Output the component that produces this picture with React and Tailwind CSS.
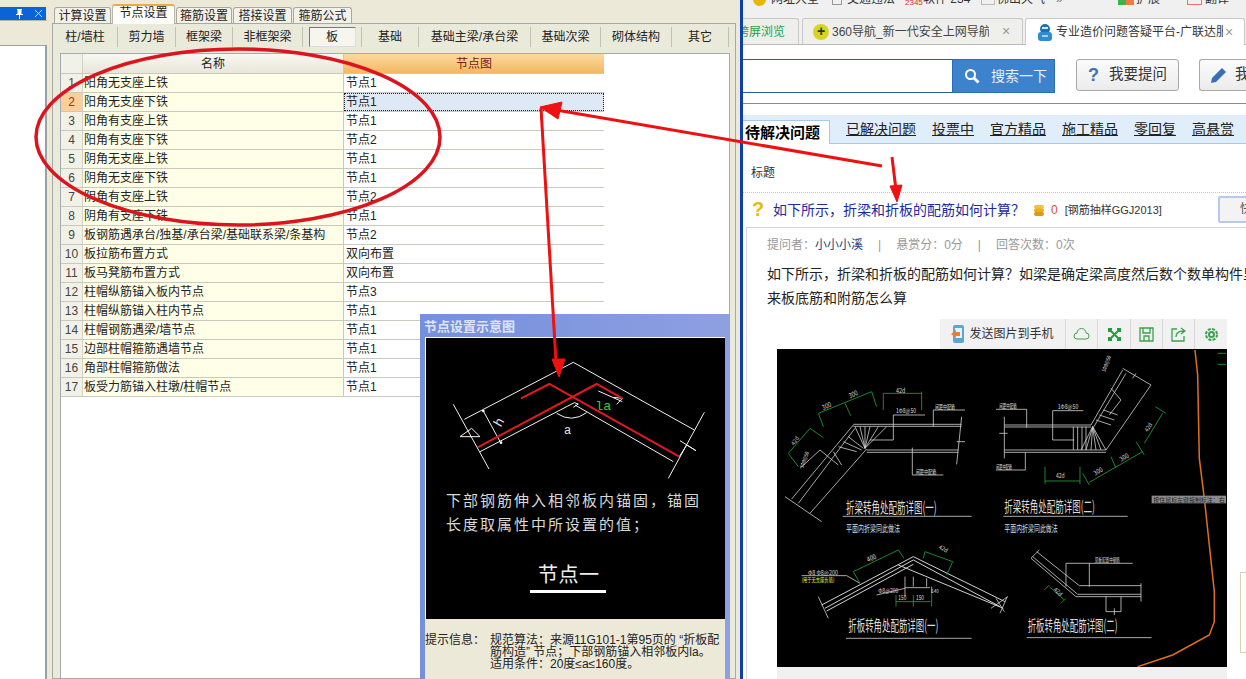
import React from "react";

const cjk = "font-['Liberation_Sans','Noto_Sans_CJK_SC',sans-serif]";

const rows = [
  ["阳角无支座上铁", "节点1"],
  ["阳角无支座下铁", "节点1"],
  ["阳角有支座上铁", "节点1"],
  ["阳角有支座下铁", "节点2"],
  ["阴角无支座上铁", "节点1"],
  ["阴角无支座下铁", "节点1"],
  ["阴角有支座上铁", "节点2"],
  ["阴角有支座下铁", "节点1"],
  ["板钢筋遇承台/独基/承台梁/基础联系梁/条基构", "节点2"],
  ["板拉筋布置方式", "双向布置"],
  ["板马凳筋布置方式", "双向布置"],
  ["柱帽纵筋锚入板内节点", "节点3"],
  ["柱帽纵筋锚入柱内节点", "节点1"],
  ["柱帽钢筋遇梁/墙节点", "节点1"],
  ["边部柱帽箍筋遇墙节点", "节点1"],
  ["角部柱帽箍筋做法", "节点1"],
  ["板受力筋锚入柱墩/柱帽节点", "节点1"],
];

const topTabs = [
  ["计算设置", "w-[57px]"],
  ["节点设置", "w-[63px]"],
  ["箍筋设置", "w-[56px]"],
  ["搭接设置", "w-[59px]"],
  ["箍筋公式", "w-[59px]"],
];
const subTabs = [
  ["柱/墙柱", "w-[65px]"],
  ["剪力墙", "w-[58px]"],
  ["框架梁", "w-[57px]"],
  ["非框架梁", "w-[70px]"],
  ["板", "w-[59px]"],
  ["基础", "w-[57px]"],
  ["基础主梁/承台梁", "w-[112px]"],
  ["基础次梁", "w-[70px]"],
  ["砌体结构", "w-[71px]"],
  ["其它", "w-[57px]"],
];
const qaTabs = ["已解决问题", "投票中", "官方精品", "施工精品", "零回复", "高悬赏"];

function Sidebar() {
  return (
    <div className="w-[47px] shrink-0 bg-[#ece9d8] flex flex-col">
      <div className="h-[13px] mt-[7px] w-[46px] bg-[#0a63d8] flex items-center justify-end gap-[11px] pr-[3px]">
        <svg width="7" height="10" viewBox="0 0 7 10">
          <path d="M1 0h5v1H5.500v4H7v1H4v4H3V6H0V5h1.500V1H1z" fill="#fff" />
        </svg>
        <svg width="9" height="9" viewBox="0 0 9 9">
          <path d="M1 1l7 7M8 1l-7 7" stroke="#cfe0f8" fill="none" />
        </svg>
      </div>
      <div className="h-[25px] border-t border-[#b5b3a5]" />
      <div className="flex-1 bg-white border-r-2 border-t border-[#9aa0a6]" />
    </div>
  );
}

function SettingsTable() {
  return (
    <div className="w-[543px] text-[12px] leading-[19px] text-[#222]">
      <div className="flex h-[20px] leading-[21px] border-b border-[#c9c9bd]">
        <div className="w-[22px] bg-[#f2f1e8] border-r border-[#d4d3c8]" />
        <div className="w-[261px] bg-gradient-to-b from-[#f8f7f1] to-[#e9e7da] border-r border-[#c9c9bd] text-center">名称</div>
        <div className="w-[260px] bg-gradient-to-b from-[#fbd9a0] to-[#f3b860] text-center text-[#7a1a10]">节点图</div>
      </div>
      {rows.map(([name, value], i) => (
        <div key={i} className="flex h-[19px] border-b border-[#c9c9bd]">
          <div className={`w-[22px] text-center border-r border-[#d4d3c8] ${i === 1 ? "bg-[#fbd098] text-[#a03020]" : "bg-[#f2f1e8] text-[#444]"}`}>
            {i + 1}
          </div>
          <div className="w-[261px] bg-[#ffffe8] border-r border-[#c9c9bd] pl-[1px] whitespace-nowrap overflow-hidden">{name}</div>
          {i === 1 ? (
            <div className="w-[260px] bg-[#dfe9f5] border border-dotted border-[#222] pl-[1px] leading-[16px]">{value}</div>
          ) : (
            <div className="w-[260px] bg-white pl-[2px]">{value}</div>
          )}
        </div>
      ))}
    </div>
  );
}

function MiddlePanel() {
  return (
    <div className="w-[693px] shrink-0 bg-[#ece9d8] pl-[5px] flex flex-col">
      <div className="h-[23px] flex items-end pl-[2px] gap-[1px] text-[12px] text-[#222]">
        {topTabs.map(([t, w], i) => (
          <div
            key={t}
            className={
              i === 1
                ? `${w} h-[20px] -mb-[1px] z-10 bg-[#fbfbf8] border-t-2 border-[#f2a93b] border-x border-x-[#b7b7ab] rounded-t-[3px] text-center leading-[15px]`
                : `${w} h-[16px] bg-[#f3f2ea] border-t border-x border-[#a8a89c] rounded-t-[3px] text-center leading-[16px]`
            }
          >
            {t}
          </div>
        ))}
      </div>
      <div className="flex-1 mr-[4px] bg-[#eaeada] border border-[#a7a9a5] flex flex-col">
        <div className="h-[29px] pt-[3px] flex text-[12px] text-[#222]">
          {subTabs.map(([t, w]) => (
            <div key={t} className={`${w} h-[20px] shrink-0 flex items-center justify-center border-r border-[#c2c0b0]`}>
              {t === "板" ? (
                <div className="w-[47px] h-[20px] border border-[#777] border-b-[#ddd] border-r-[#ddd] bg-[#f6f5ee] text-center leading-[19px]">板</div>
              ) : (
                t
              )}
            </div>
          ))}
        </div>
        <div className="flex-1 bg-white ml-[7px] mr-[5px] border-t border-l border-r border-[#a3abb3]">
          <SettingsTable />
        </div>
      </div>
    </div>
  );
}

function NodeDialog() {
  return (
    <div className="absolute left-[420px] top-[314px] w-[310px] h-[365px] bg-gradient-to-r from-[#7490dc] to-[#8f9fe2] px-[5px] pt-[2px] flex flex-col">
      <div className="h-[21px] text-[13px] leading-[21px] font-bold text-[#dfe5f6] -ml-[1px]">节点设置示意图</div>
      <div className="relative h-[282px] bg-black border-t border-l border-white">
        <svg className="absolute inset-0" width="299" height="281" viewBox="33 84 897 843">
          <g fill="none" stroke="#f2f2f2" strokeWidth="3">
            <path d="M148 328L475 157L838 360" />
            <path d="M195 425L478 278M480 285L775 455" />
            <path d="M550 243L622 275" />
            <path d="M115 283L222 477" />
            <path d="M205 303L258 400" />
            <path d="M868 307L760 505" />
            <path d="M135 380H195L170 355z" />
            <path d="M795 392L843 422L815 405L793 440" />
            <path d="M425 310Q470 340 515 308" />
            <path d="M605 283L622 265L595 262" />
            <path d="M475 292L490 282L478 278" />
          </g>
          <circle cx="205" cy="303" r="4" fill="#fff" />
          <circle cx="258" cy="398" r="4" fill="#fff" />
          <g fill="none" stroke="#e01820" strokeWidth="6">
            <path d="M188 412L545 222L622 265" />
            <path d="M318 265L403 222L793 440" />
          </g>
          <text x="447" y="372" fill="#e6e6e6" fontSize="36" fontFamily="Liberation Mono">a</text>
          <text x="541" y="300" fill="#27d727" fontSize="40" fontFamily="Liberation Mono">la</text>
          <text x="238" y="350" fill="#e6e6e6" fontSize="40" fontFamily="Liberation Mono" transform="rotate(-60 250 335)">h</text>
        </svg>
        <div className="absolute left-[20px] top-[151px] text-[15px] leading-[24px] tracking-[2px] text-[#d8d8d8] whitespace-nowrap">
          <div>下部钢筋伸入相邻板内锚固，锚固</div>
          <div>长度取属性中所设置的值；</div>
        </div>
        <div className="absolute left-[112px] top-[223px] text-[20px] leading-[28px] tracking-[0.5px] text-[#eee] whitespace-nowrap">节点一</div>
        <div className="absolute left-[104px] top-[252px] w-[76px] h-[3px] bg-white" />
      </div>
      <div className="flex-1 bg-[#ece9d8] text-[12px] leading-[12px] text-[#222] pt-[15px] flex whitespace-nowrap">
        <div className="w-[65px] shrink-0">提示信息：</div>
        <div>
          <div>规范算法：来源11G101-1第95页的 “折板配</div>
          <div>筋构造” 节点；下部钢筋锚入相邻板内la。</div>
          <div>适用条件：20度≤a≤160度。</div>
        </div>
      </div>
    </div>
  );
}

function BrowserChrome() {
  return (
    <div className="bg-[#f0f0f0] shrink-0">
      <div className="h-[18px] overflow-hidden text-[12px] leading-[12px] text-[#333] whitespace-nowrap">
        <div className="flex -mt-[7px] h-[13px] items-start">
          <span className="ml-[10px] w-[13px] h-[13px] rounded-full bg-[#e8b800]" />
          <span className="ml-[5px] w-[48px]">网址大全</span>
          <span className="ml-[13px] w-[10px] h-[12px] border border-[#999]" />
          <span className="ml-[5px] w-[48px]">交通违法</span>
          <span className="ml-[10px] mt-[6px] w-[17px] text-[8px] leading-[8px] text-[#c33]">2345</span>
          <span className="ml-[1px] w-[44px]">软件 234</span>
          <span className="ml-[14px] w-[14px] h-[12px] border border-[#bbb]" />
          <span className="ml-[2px] w-[48px]">佛山天气</span>
          <span className="ml-[11px] w-[62px] text-[#777]">»</span>
          <span className="w-[8px] h-[12px] bg-[#3cb44a]" />
          <span className="w-[8px] h-[12px] bg-[#ee7b46]" />
          <span className="ml-[2px] w-[26px]">扩展</span>
          <span className="ml-[25px] w-[15px] h-[12px] border border-[#d77]" />
          <span className="ml-[3px]">翻译</span>
        </div>
      </div>
      <div className="h-[27px] flex items-stretch text-[12px] border-b border-[#b9b9b9]">
        <div className="w-[56px] bg-[#eeeeea] border-r border-t border-[#c9c9c9] rounded-tr-[3px] leading-[26px] text-[#1ea050] whitespace-nowrap overflow-hidden">
          <span className="-ml-[6px] block">跨屏浏览</span>
        </div>
        <div className="w-[221px] ml-[3px] bg-[#efefeb] border border-b-0 border-[#c9c9c9] rounded-t-[3px] flex items-center pl-[10px] text-[#444] whitespace-nowrap">
          <span className="w-[16px] h-[16px] rounded-full bg-[#d8d322] text-[#143] text-[14px] leading-[15px] text-center font-bold mr-[3px] shrink-0">+</span>
          <span className="w-[157px] overflow-hidden">360导航_新一代安全上网导航</span>
          <span className="ml-[13px] text-[#999] text-[14px]">×</span>
        </div>
        <div className="w-[220px] -mb-[1px] ml-[2px] bg-white border border-b-0 border-[#c9c9c9] rounded-t-[3px] flex items-center pl-[11px] text-[#333] whitespace-nowrap">
          <svg width="16" height="17" viewBox="0 0 16 17" className="mr-[3px] shrink-0">
            <circle cx="8" cy="5" r="5" fill="#1f6fb3" />
            <rect x="1" y="8" width="14" height="9" rx="3" fill="#2e8cd0" />
            <path d="M5 4h6" stroke="#cfe8fa" strokeWidth="2" />
            <path d="M5 12h6" stroke="#cfe8fa" strokeWidth="1.500" />
          </svg>
          <span className="w-[167px] overflow-hidden">专业造价问题答疑平台-广联达服</span>
          <span className="ml-[2px] text-[#999] text-[14px] leading-[14px]">×</span>
        </div>
      </div>
    </div>
  );
}

function SearchRow() {
  return (
    <div className="h-[59px] shrink-0 bg-white border-b border-[#8a8a8a] flex items-start pt-[14px]">
      <div className="w-[209px] h-[34px] border-y border-[#2b5c9e]" />
      <div className="w-[103px] h-[34px] bg-[#3d82cd] border border-[#2b6cb5] flex items-center pl-[11px] text-[#e8f1fb] text-[14px] gap-[11px] whitespace-nowrap">
        <svg width="16" height="16" viewBox="0 0 16 16" fill="none" stroke="#fff" strokeWidth="2">
          <circle cx="6.500" cy="6.500" r="4.500" />
          <path d="M10 10l4.500 4.500" strokeWidth="3" />
        </svg>
        搜索一下
      </div>
      <div className="w-[103px] h-[32px] ml-[21px] bg-gradient-to-b from-[#fbfbfb] to-[#ececec] border border-[#a9a9a9] rounded-[3px] flex items-center pl-[11px] text-[14.5px] text-[#333] whitespace-nowrap">
        <span className="text-[#3d72b5] text-[18px] font-bold mr-[13px] w-[8px]">?</span>
        我要提问
      </div>
      <div className="flex-1 h-[32px] ml-[20px] bg-gradient-to-b from-[#fbfbfb] to-[#ececec] border border-[#a9a9a9] border-r-0 rounded-l-[3px] flex items-center pl-[10px] text-[14.5px] text-[#333] whitespace-nowrap overflow-hidden">
        <svg width="17" height="17" viewBox="0 0 17 17" className="mr-[8px] shrink-0">
          <path d="M1 16l1-5L12 1l4 4L6 15z" fill="#3a6fb5" />
        </svg>
        我
      </div>
    </div>
  );
}

function Lbl({ x, y, s, w, r, fill = "#dcdcdc", children }) {
  return (
    <text
      x={x}
      y={y}
      fontSize={s}
      fill={fill}
      textLength={w}
      lengthAdjust="spacingAndGlyphs"
      transform={r ? `rotate(${r} ${x} ${y})` : undefined}
    >
      {children}
    </text>
  );
}

function CadDrawing() {
  return (
    <svg width="450" height="318" viewBox="0 0 450 318" className="block font-['Noto_Sans_CJK_SC',sans-serif]">
      <rect width="450" height="318" fill="#000" />
      {/* left two details, drawn at 3x */}
      <g transform="translate(-7 -4) scale(0.3333)">
        <g fill="none" stroke="#d2d2d2" strokeWidth="2.400">
          <path d="M250 238H575M250 244H575M250 240L65 462M255 250L85 475M290 312L120 505M290 315H565M290 322H565" />
          <path d="M45 455L155 530M575 215L560 358M560 290H585" />
          <path d="M370 210V285H300M370 210H465M490 195H585M490 195V245M427 308V390H520M90 370L150 315L205 360" />
          <path d="M285 310L255 245M285 310L270 245M285 310V245M285 310L300 245M285 310L325 245M285 310L350 245" />
          <path d="M235 275L280 310M220 290L275 315M205 305L260 320M190 320L215 360" />
          <path d="M218 514H605M228 880H605" />
          <path d="M430 635L155 780M430 645L165 790M430 658L170 798M430 635L705 770M430 645L690 785M385 660L700 790" strokeWidth="3" />
          <path d="M145 755L175 820M712 755L690 805M95 692H230L270 715" />
          <path d="M405 695V755M430 695V725M470 700V725M485 725V745M320 750L405 730M405 728H480" />
        </g>
        <g fill="none" stroke="#1f9a3a" strokeWidth="2.600">
          <path d="M340 145H455M340 145V195M455 140V195" />
          <path d="M145 205L305 140M145 205L160 245M225 175L242 212M305 140L320 185" />
          <path d="M55 325L120 250L160 278M55 325L85 365" />
          <path d="M250 680L385 615M250 680L270 715M385 615L402 640" />
          <path d="M465 620L548 650L530 690M465 620L460 640" />
          <path d="M378 770H482M378 750V785M430 750V785M485 745V785" />
        </g>
        <Lbl x={228} y={505} s={46} w={272}>折梁转角处配筋详图(一)</Lbl>
        <Lbl x={228} y={562} s={28} w={162}>平面内折梁同此做法</Lbl>
        <Lbl x={235} y={858} s={46} w={270}>折板转角处配筋详图(一)</Lbl>
        <Lbl x={378} y={204} s={18} w={60}>1Φ8@50</Lbl>
        <Lbl x={495} y={192} s={18} w={60}>间距中配筋</Lbl>
        <Lbl x={437} y={386} s={18} w={62}>间距中配筋</Lbl>
        <Lbl x={378} y={144} s={18} w={28}>42d</Lbl>
        <Lbl x={160} y={195} s={20} w={28} r={-25}>300</Lbl>
        <Lbl x={240} y={160} s={20} w={28} r={-25}>300</Lbl>
        <Lbl x={72} y={302} s={18} w={28} r={-55}>42d</Lbl>
        <Lbl x={100} y={370} s={16} w={50} r={-70}>1Φ8@50</Lbl>
        <Lbl x={114} y={690} s={18} w={90}>Φ8 Φ8@200</Lbl>
        <Lbl x={95} y={712} s={17} w={98} fill="#f2e93a">(用于无支座负筋)</Lbl>
        <Lbl x={325} y={743} s={18} w={60}>Φ8@200</Lbl>
        <Lbl x={295} y={652} s={22} w={28} r={-25}>400</Lbl>
        <Lbl x={505} y={610} s={18} w={28} r={30}>42d</Lbl>
        <Lbl x={385} y={766} s={18} w={24}>150</Lbl>
        <Lbl x={438} y={766} s={18} w={24}>150</Lbl>
        <Lbl x={484} y={743} s={16} w={22}>140</Lbl>
      </g>
      {/* right two details */}
      <g transform="translate(219 -4) scale(0.3333)">
        <g fill="none" stroke="#d2d2d2" strokeWidth="2.400">
          <path d="M25 240H285M25 246H285M25 315H330M25 322H330M285 240L380 75M293 246L390 85M330 315L465 120M290 245L330 315" />
          <path d="M380 70L465 120M410 100L420 85M25 215V340M10 265H35" />
          <path d="M0 193H92V248M170 197H262M170 197V285H235M0 375H88V322" />
          <path d="M232 245V315M245 245V315M258 245V315M270 245V315M290 245L255 315M290 245L270 315M290 245L285 315M290 245L300 315M290 245L315 315" />
          <path d="M300 225L345 240M310 210L355 225M322 195L365 210M345 130L375 165L340 210" />
          <path d="M22 514H395M92 878H467" />
          <path d="M105 640L240 755H435M110 635L245 748H435M122 620L250 722H435M210 655H410M210 655V725M280 655V725M330 755V800H375V755M355 790V810M435 715V770M105 640L130 615" />
          <path d="M0 760L25 800M-15 790L35 755" />
        </g>
        <g fill="none" stroke="#1f9a3a" strokeWidth="2.600">
          <path d="M147 408H252M147 365V418M252 365V418" />
          <path d="M280 412L440 320M260 385L280 420M345 335L360 370M420 290L445 330" />
          <path d="M445 295L500 205M510 205L478 185" />
          <path d="M145 735L160 720M195 775L210 760M160 725L205 765" />
          <path d="M665 25H690M665 58H690" />
        </g>
        <path d="M597 15L605 90L610 340L625 460L655 740V830L640 870L530 930L425 965" fill="none" stroke="#e0701c" strokeWidth="4.500" />
        <Lbl x={25} y={500} s={46} w={272}>折梁转角处配筋详图(二)</Lbl>
        <Lbl x={25} y={560} s={28} w={160}>平面内折梁同此做法</Lbl>
        <Lbl x={95} y={858} s={46} w={270}>折板转角处配筋详图(二)</Lbl>
        <Lbl x={10} y={190} s={18} w={52}>间距中配筋</Lbl>
        <Lbl x={0} y={372} s={18} w={48}>间距中配筋</Lbl>
        <Lbl x={185} y={192} s={18} w={62}>1Φ8@50</Lbl>
        <Lbl x={180} y={400} s={18} w={26}>42d</Lbl>
        <Lbl x={298} y={392} s={20} w={28} r={-30}>300</Lbl>
        <Lbl x={376} y={350} s={20} w={28} r={-30}>300</Lbl>
        <Lbl x={455} y={262} s={18} w={28} r={-60}>42d</Lbl>
        <Lbl x={328} y={82} s={16} w={50} r={-70}>1Φ8@50</Lbl>
        <Lbl x={296} y={652} s={16} w={76}>见板配置中钢筋</Lbl>
        <Lbl x={172} y={735} s={18} w={28} r={45}>42d</Lbl>
        <rect x="467" y="452" width="223" height="23" fill="#8c8c8c" />
        <Lbl x={472} y={470} s={18} w={214} fill="#222">按住鼠标左键拖制标注：右</Lbl>
      </g>
    </svg>
  );
}

function QaPage() {
  return (
    <div className="flex-1 bg-white flex flex-col min-h-0">
      <div className="h-[29px] mt-[11px] shrink-0 bg-[#e0eefb] border-b border-[#a9c9e6] flex items-end text-[14px] text-[#222]">
        <div className="w-[87px] h-[24px] -mb-[1px] bg-white border-t border-r border-[#a9c9e6] text-[15px] font-bold leading-[23px] pl-[2px] text-black whitespace-nowrap">待解决问题</div>
        <div className="flex gap-[16px] pl-[16px] pb-[3px] whitespace-nowrap">
          {qaTabs.map((t) => (
            <span key={t} className="underline">{t}</span>
          ))}
        </div>
      </div>
      <div className="h-[49px] shrink-0 border-b border-dotted border-[#c4c4c4] text-[12px] leading-[18px] text-[#333] pl-[8px] pt-[20px]">标题</div>
      <div className="h-[34px] shrink-0 flex items-center pl-[9px] whitespace-nowrap relative">
        <span className="text-[#e8b81c] font-bold text-[20px] leading-[20px] w-[21px] -mt-[3px]">?</span>
        <span className="text-[14px] text-[#1c2aa0]">如下所示，折梁和折板的配筋如何计算？</span>
        <svg width="10" height="11" viewBox="0 0 10 11" className="ml-[9px]">
          <rect y="0" width="10" height="4" rx="2" fill="#f3c23a" />
          <rect y="3.500" width="10" height="4" rx="2" fill="#e8ae24" />
          <rect y="7" width="10" height="4" rx="2" fill="#d99a16" />
        </svg>
        <span className="text-[12px] text-[#d84848] ml-[7px]">0</span>
        <span className="text-[11px] text-[#333] ml-[7px]">[钢筋抽样GGJ2013]</span>
        <div className="absolute left-[475px] top-[3px] w-[40px] h-[27px] bg-[#f3f3f3] border-2 border-[#b9c9ea] rounded-[2px] text-[12px] leading-[23px] pl-[20px] text-[#555]">快</div>
      </div>
      <div className="flex-1 ml-[3px] border-t border-l border-[#d5d5d5] pl-[20px] flex flex-col min-h-0 overflow-hidden">
        <div className="h-[34px] shrink-0 text-[12px] leading-[34px] text-[#999] whitespace-nowrap">
          提问者：<span className="text-[#26447a]">小小小溪</span>
          <span className="mx-[15px]">|</span>悬赏分：0分
          <span className="mx-[15px]">|</span>回答次数：0次
        </div>
        <div className="text-[14px] leading-[24px] text-[#222] whitespace-nowrap overflow-hidden h-[48px] shrink-0">
          <div>如下所示，折梁和折板的配筋如何计算？如梁是确定梁高度然后数个数单构件里</div>
          <div>来板底筋和附筋怎么算</div>
        </div>
        <div className="ml-[173px] mt-[9px] h-[30px] w-[287px] bg-[#f1f1f1] flex text-[12px] text-[#333] shrink-0">
          <div className="w-[126px] flex items-center justify-center gap-[4px] border-r border-[#d8d8d8] whitespace-nowrap">
            <svg width="14" height="18" viewBox="0 0 14 18">
              <rect x="2" y="0" width="11" height="18" rx="2" fill="#57a8d8" />
              <rect x="4" y="3" width="7" height="10" fill="#e6f3fb" />
              <path d="M0 9l5-4v2h4v4H5v2z" fill="#ee7b33" />
            </svg>
            发送图片到手机
          </div>
          <div className="w-[32px] flex items-center justify-center border-r border-[#d8d8d8]">
            <svg width="17" height="12" viewBox="0 0 17 12" fill="none" stroke="#43a24d"><path d="M4 11a3 3 0 0 1 0-6 4.500 4.500 0 0 1 9 0 3 3 0 0 1 0 6z" /></svg>
          </div>
          <div className="w-[33px] flex items-center justify-center border-r border-[#d8d8d8]">
            <svg width="13" height="13" viewBox="0 0 13 13" fill="none" stroke="#1fa03c" strokeWidth="2"><path d="M2 2l9 9M11 2l-9 9M1 4V1h3M9 1h3v3M12 9v3H9M4 12H1V9" /></svg>
          </div>
          <div className="w-[32px] flex items-center justify-center border-r border-[#d8d8d8]">
            <svg width="15" height="15" viewBox="0 0 15 15" fill="none" stroke="#3aa24d" strokeWidth="1.300"><path d="M1 1h13v13H1zM4 1v5h7V1M5 9h5v5H5z" /></svg>
          </div>
          <div className="w-[32px] flex items-center justify-center border-r border-[#d8d8d8]">
            <svg width="15" height="15" viewBox="0 0 15 15" fill="none" stroke="#3aa24d" strokeWidth="1.300"><path d="M6 2H1v12h12V9M5 10c0-4 3-6 8-6M10 1l4 3-4 3" /></svg>
          </div>
          <div className="flex-1 flex items-center justify-center">
            <svg width="15" height="15" viewBox="0 0 15 15" fill="none" stroke="#3aa24d" strokeWidth="2"><circle cx="7.500" cy="7.500" r="2.500" /><circle cx="7.500" cy="7.500" r="5.500" strokeDasharray="3 1.300" /></svg>
          </div>
        </div>
        <div className="ml-[10px] w-[450px] shrink-0 bg-[#f0f0f0] h-[330px]">
          <CadDrawing />
        </div>
      </div>
    </div>
  );
}

function BrowserPanel() {
  return (
    <div className="flex-1 min-w-0 border-l-[3px] border-[#0c3fb4] flex flex-col bg-white">
      <BrowserChrome />
      <SearchRow />
      <QaPage />
    </div>
  );
}

function Annotations() {
  return (
    <svg className="absolute inset-0 pointer-events-none" width="1246" height="679" viewBox="0 0 1246 679">
      <ellipse cx="238" cy="137" rx="202" ry="88" fill="none" stroke="#dc141e" strokeWidth="3.500" />
      <g stroke="#ee1111" strokeWidth="3" fill="#ee1111">
        <path d="M882 166L556 110" fill="none" />
        <path d="M540 107L562 102L558 119z" strokeWidth="1" />
        <path d="M541 108L556 362" fill="none" />
        <path d="M559 377L552 359L565 359z" strokeWidth="1" />
        <path d="M892 157L896 190" fill="none" />
        <path d="M897 202L890 186L902 185z" strokeWidth="1" />
      </g>
    </svg>
  );
}

export default function App() {
  return (
    <div className={`relative w-[1246px] h-[679px] overflow-hidden flex bg-white ${cjk}`}>
      <Sidebar />
      <MiddlePanel />
      <BrowserPanel />
      <NodeDialog />
      <div className="absolute left-[1240px] top-[572px] w-[6px] h-[81px] border-t border-b border-l border-[#d8d2b8]" />
      <Annotations />
    </div>
  );
}
